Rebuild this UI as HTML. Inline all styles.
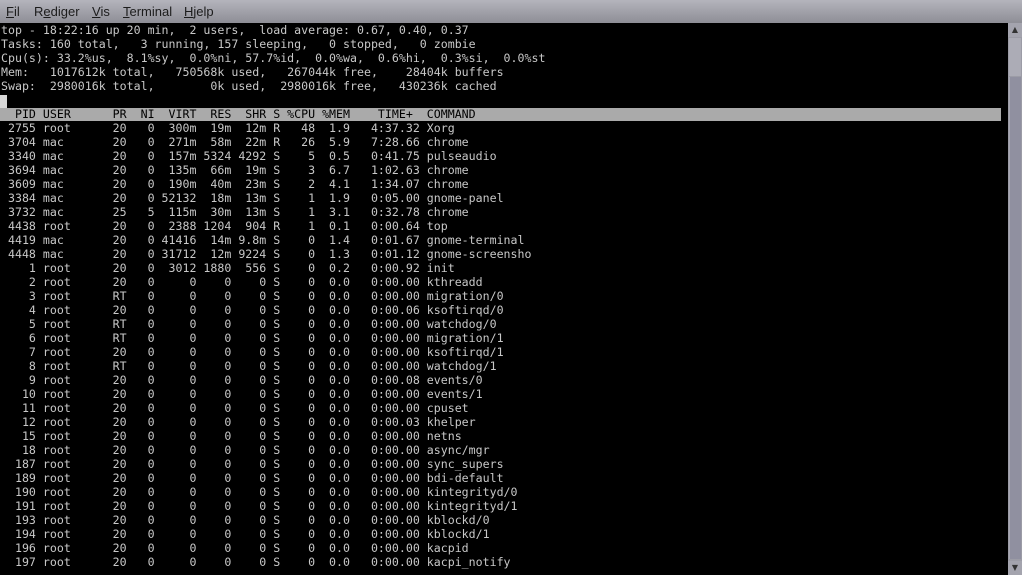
<!DOCTYPE html>
<html><head><meta charset="utf-8"><style>
html,body{margin:0;padding:0;width:1022px;height:575px;overflow:hidden;background:#000;}
#menu{position:absolute;left:0;top:0;width:1022px;height:23px;background:linear-gradient(#b4b4bc,#8e8e96);font-family:"Liberation Sans",sans-serif;font-size:13px;color:#1c1c1c;}
#menu span{position:absolute;top:4px;}
#menu u{text-decoration:underline;}
#term{position:absolute;left:0;top:23px;width:1008px;height:552px;background:#000;}
pre{margin:0;position:absolute;left:1px;top:0;font-family:"DejaVu Sans Mono",monospace;font-size:11.6px;line-height:14px;color:#c8c8c8;}
#bar{position:absolute;left:0;top:85px;width:1001px;height:13px;background:#aaaaaa;}
#cur{position:absolute;left:0;top:72px;width:7px;height:13px;background:#d8d8d8;}
.hd{color:#000;}
#sb{position:absolute;left:1008px;top:23px;width:14px;height:552px;background:#9c9ca6;}
#sb .btn{position:absolute;left:0;width:14px;height:14px;background:#a4a4ae;font-size:8px;color:#333;text-align:center;line-height:14px;font-family:"DejaVu Sans",sans-serif;}
#sb .tr{position:absolute;left:1px;top:15px;width:12px;height:38px;background:#acacb6;}
#sb .th{position:absolute;left:1px;top:54px;width:11px;height:482px;background:#9090a0;border-left:1px solid #a8a8b4;}
</style></head><body>
<div id="menu"><span style="left:6px"><u>F</u>il</span><span style="left:34px">R<u>e</u>diger</span><span style="left:92px"><u>V</u>is</span><span style="left:123px"><u>T</u>erminal</span><span style="left:184px"><u>H</u>jelp</span></div>
<div id="term">
<div id="bar"></div><div id="cur"></div>
<pre>top - 18:22:16 up 20 min,  2 users,  load average: 0.67, 0.40, 0.37
Tasks: 160 total,   3 running, 157 sleeping,   0 stopped,   0 zombie
Cpu(s): 33.2%us,  8.1%sy,  0.0%ni, 57.7%id,  0.0%wa,  0.6%hi,  0.3%si,  0.0%st
Mem:   1017612k total,   750568k used,   267044k free,    28404k buffers
Swap:  2980016k total,        0k used,  2980016k free,   430236k cached

<span class="hd">  PID USER      PR  NI  VIRT  RES  SHR S %CPU %MEM    TIME+  COMMAND</span>
 2755 root      20   0  300m  19m  12m R   48  1.9   4:37.32 Xorg
 3704 mac       20   0  271m  58m  22m R   26  5.9   7:28.66 chrome
 3340 mac       20   0  157m 5324 4292 S    5  0.5   0:41.75 pulseaudio
 3694 mac       20   0  135m  66m  19m S    3  6.7   1:02.63 chrome
 3609 mac       20   0  190m  40m  23m S    2  4.1   1:34.07 chrome
 3384 mac       20   0 52132  18m  13m S    1  1.9   0:05.00 gnome-panel
 3732 mac       25   5  115m  30m  13m S    1  3.1   0:32.78 chrome
 4438 root      20   0  2388 1204  904 R    1  0.1   0:00.64 top
 4419 mac       20   0 41416  14m 9.8m S    0  1.4   0:01.67 gnome-terminal
 4448 mac       20   0 31712  12m 9224 S    0  1.3   0:01.12 gnome-screensho
    1 root      20   0  3012 1880  556 S    0  0.2   0:00.92 init
    2 root      20   0     0    0    0 S    0  0.0   0:00.00 kthreadd
    3 root      RT   0     0    0    0 S    0  0.0   0:00.00 migration/0
    4 root      20   0     0    0    0 S    0  0.0   0:00.06 ksoftirqd/0
    5 root      RT   0     0    0    0 S    0  0.0   0:00.00 watchdog/0
    6 root      RT   0     0    0    0 S    0  0.0   0:00.00 migration/1
    7 root      20   0     0    0    0 S    0  0.0   0:00.00 ksoftirqd/1
    8 root      RT   0     0    0    0 S    0  0.0   0:00.00 watchdog/1
    9 root      20   0     0    0    0 S    0  0.0   0:00.08 events/0
   10 root      20   0     0    0    0 S    0  0.0   0:00.00 events/1
   11 root      20   0     0    0    0 S    0  0.0   0:00.00 cpuset
   12 root      20   0     0    0    0 S    0  0.0   0:00.03 khelper
   15 root      20   0     0    0    0 S    0  0.0   0:00.00 netns
   18 root      20   0     0    0    0 S    0  0.0   0:00.00 async/mgr
  187 root      20   0     0    0    0 S    0  0.0   0:00.00 sync_supers
  189 root      20   0     0    0    0 S    0  0.0   0:00.00 bdi-default
  190 root      20   0     0    0    0 S    0  0.0   0:00.00 kintegrityd/0
  191 root      20   0     0    0    0 S    0  0.0   0:00.00 kintegrityd/1
  193 root      20   0     0    0    0 S    0  0.0   0:00.00 kblockd/0
  194 root      20   0     0    0    0 S    0  0.0   0:00.00 kblockd/1
  196 root      20   0     0    0    0 S    0  0.0   0:00.00 kacpid
  197 root      20   0     0    0    0 S    0  0.0   0:00.00 kacpi_notify</pre>
</div>
<div id="sb"><div class="btn" style="top:0">&#9650;</div><div class="tr"></div><div class="th"></div><div class="btn" style="top:538px">&#9660;</div></div>
</body></html>
